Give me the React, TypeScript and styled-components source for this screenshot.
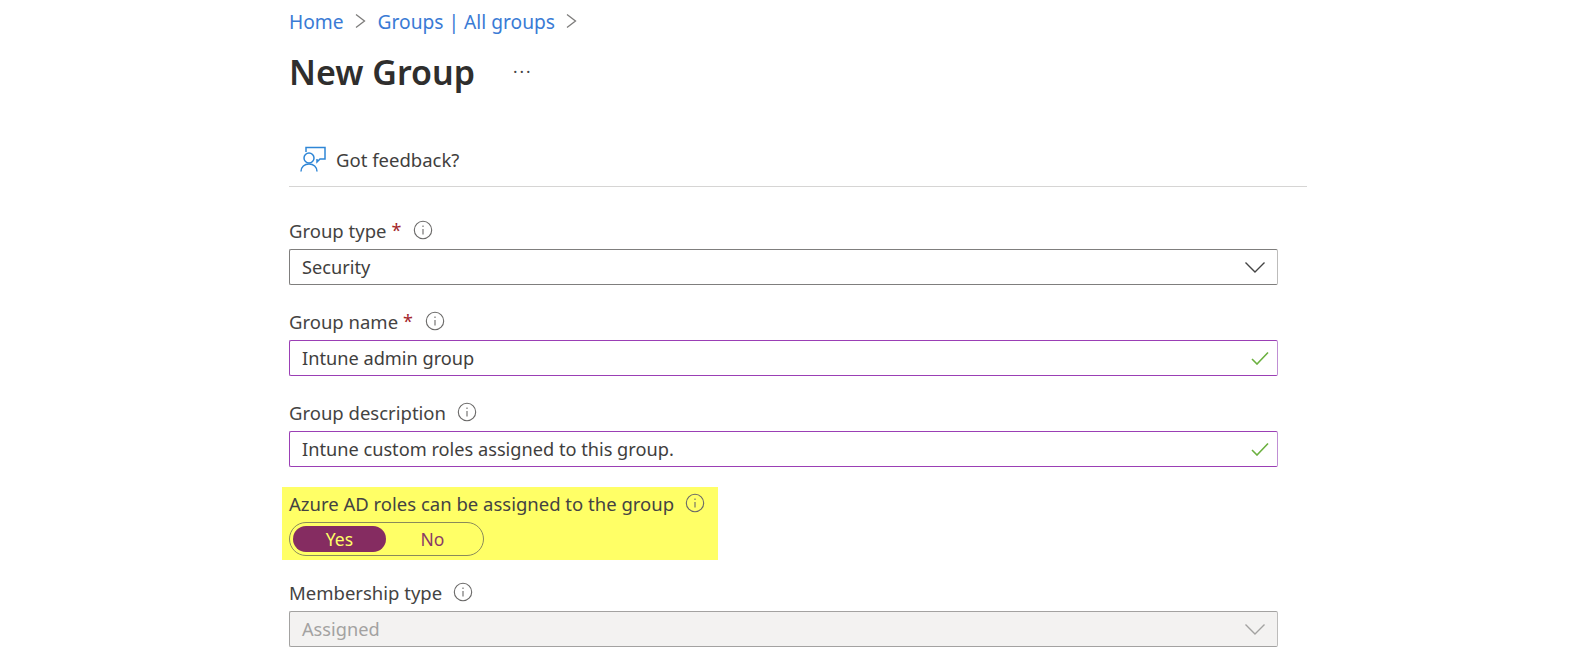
import * as React from "react";
import styled, { createGlobalStyle } from "styled-components";

const GlobalStyle = createGlobalStyle`
  html, body {
    margin: 0;
    padding: 0;
    background: #fff;
    overflow: hidden;
  }
  body {
    font-family: "Noto Sans", "Open Sans", sans-serif;
    color: #3f3e3d;
  }
`;

const Page = styled.div`
  width: 1018px;
  height: 663px;
  margin-left: 289px;
  display: flex;
  flex-direction: column;
`;

const Breadcrumb = styled.nav`
  height: 44px;
  padding-bottom: 2px;
  box-sizing: border-box;
  display: flex;
  align-items: center;
  font-size: 19.2px;
`;

const Crumb = styled.span`
  color: #3a7bd5;
`;

const CrumbChevron = styled.svg`
  width: 12px;
  height: 16px;
  margin: 0 12px 0 10px;
  fill: none;
  stroke: #7d7c7b;
  stroke-width: 1.3;
`;

const TitleRow = styled.div`
  height: 55px;
  display: flex;
  align-items: center;
`;

const Title = styled.h1`
  margin: 0;
  font-size: 34px;
  font-weight: 600;
  color: #2f2e2d;
`;

const More = styled.span`
  margin-left: 38px;
  font-size: 17px;
  letter-spacing: 2px;
  color: #444;
`;

const Toolbar = styled.div`
  margin-top: 27px;
  height: 61px;
  box-sizing: border-box;
  padding: 20px 0 0 11px;
  display: flex;
  align-items: flex-start;
  border-bottom: 1px solid #d6d5d4;
`;

const FeedbackIcon = styled.svg`
  width: 26px;
  height: 26px;
  fill: none;
  stroke: #2f86d6;
  stroke-width: 1.5;
`;

const FeedbackLabel = styled.span`
  margin-left: 10px;
  font-size: 18.5px;
  line-height: 28px;
`;

const Form = styled.div`
  width: 989px;
  display: flex;
  flex-direction: column;
`;

const Field = styled.div<{ $top: number }>`
  margin-top: ${(p) => p.$top}px;
  display: flex;
  flex-direction: column;
`;

const LabelRow = styled.div`
  height: 26px;
  margin-bottom: 5px;
  padding-bottom: 2px;
  box-sizing: border-box;
  display: flex;
  align-items: center;
  font-size: 18.5px;
  color: #444342;
`;

const Required = styled.span`
  margin: 0 1px 0 5px;
  color: #a4262c;
  font-size: 18px;
`;

const InfoIcon = styled.svg`
  width: 20px;
  height: 20px;
  margin-left: 11px;
  fill: none;
  stroke: #6a6968;
  stroke-width: 1.1;
`;

const Control = styled.div<{ $tone: "plain" | "valid" | "disabled" }>`
  height: 36px;
  box-sizing: border-box;
  padding: 0 11px 0 12px;
  display: flex;
  align-items: center;
  justify-content: space-between;
  font-size: 18.2px;
  border-radius: 2px;
  border: 1px solid
    ${(p) => (p.$tone === "valid" ? "#9b3fb5" : p.$tone === "disabled" ? "#a3a2a1" : "#7f7e7d")};
  border-right-color: ${(p) => (p.$tone === "valid" ? "#c08fd4" : "#bdbcbb")};
  background: ${(p) => (p.$tone === "disabled" ? "#f3f2f1" : "#fff")};
  color: ${(p) => (p.$tone === "disabled" ? "#a3a2a1" : "#3f3e3d")};
`;

const Highlight = styled.div`
  margin: 20px 0 0 -7px;
  padding: 0 0 4px 7px;
  width: 436px;
  height: 73px;
  box-sizing: border-box;
  background: #ffff66;
  display: flex;
  flex-direction: column;
  justify-content: flex-end;
`;

const Toggle = styled.div`
  width: 195px;
  height: 34px;
  box-sizing: border-box;
  padding: 3px 4px 3px 3px;
  display: flex;
  border: 1px solid #8a8a5a;
  border-radius: 17px;
`;

const ToggleOption = styled.div<{ $selected?: boolean }>`
  width: 93px;
  display: flex;
  align-items: center;
  justify-content: center;
  font-size: 17.5px;
  border-radius: 14px;
  background: ${(p) => (p.$selected ? "#852c61" : "transparent")};
  color: ${(p) => (p.$selected ? "#ffff66" : "#8a3a66")};
`;

const Chevron = styled.svg<{ $muted?: boolean }>`
  width: 22px;
  height: 13px;
  fill: none;
  stroke: ${(p) => (p.$muted ? "#a3a2a1" : "#444")};
  stroke-width: 1.4;
`;

const Check = styled.svg`
  width: 18px;
  height: 14px;
  margin-right: -3px;
  fill: none;
  stroke: #6bb03f;
  stroke-width: 1.6;
`;

const Info = () => (
  <InfoIcon viewBox="0 0 20 20">
    <circle cx="10" cy="10" r="8.700" />
    <path d="M10 9v5.500M10 5.500v1.400" />
  </InfoIcon>
);

const Down = ({ muted }: { muted?: boolean }) => (
  <Chevron viewBox="0 0 22 13" $muted={muted}>
    <path d="M1.500 1.500 11 11l9.500-9.500" />
  </Chevron>
);

const Valid = () => (
  <Check viewBox="0 0 18 14">
    <path d="M1 8l5 5L17 1.500" />
  </Check>
);

const CrumbArrow = () => (
  <CrumbChevron viewBox="0 0 12 16">
    <path d="M2 1.500l8.500 6.500-8.500 6.500" />
  </CrumbChevron>
);

const App: React.FC = () => {
  return (
    <>
      <GlobalStyle />
      <Page>
        <Breadcrumb>
          <Crumb>Home</Crumb>
          <CrumbArrow />
          <Crumb>Groups | All groups</Crumb>
          <CrumbArrow />
        </Breadcrumb>
        <TitleRow>
          <Title>New Group</Title>
          <More>···</More>
        </TitleRow>
        <Toolbar>
          <FeedbackIcon viewBox="0 0 26 26">
            <path d="M6 6V1.500h19V13h-5l-3 3v-3" />
            <circle cx="9" cy="12" r="5" />
            <path d="M1 25.500c0-4.500 3.500-7.500 8-7.500s8 3 8 7.500" />
          </FeedbackIcon>
          <FeedbackLabel>Got feedback?</FeedbackLabel>
        </Toolbar>
        <Form>
          <Field $top={31}>
            <LabelRow>
              Group type<Required>*</Required>
              <Info />
            </LabelRow>
            <Control $tone="plain">
              Security
              <Down />
            </Control>
          </Field>
          <Field $top={24}>
            <LabelRow>
              Group name<Required>*</Required>
              <Info />
            </LabelRow>
            <Control $tone="valid">
              Intune admin group
              <Valid />
            </Control>
          </Field>
          <Field $top={24}>
            <LabelRow>
              Group description
              <Info />
            </LabelRow>
            <Control $tone="valid">
              Intune custom roles assigned to this group.
              <Valid />
            </Control>
          </Field>
          <Highlight>
            <LabelRow>
              Azure AD roles can be assigned to the group
              <Info />
            </LabelRow>
            <Toggle>
              <ToggleOption $selected>Yes</ToggleOption>
              <ToggleOption>No</ToggleOption>
            </Toggle>
          </Highlight>
          <Field $top={20}>
            <LabelRow>
              Membership type
              <Info />
            </LabelRow>
            <Control $tone="disabled">
              Assigned
              <Down muted />
            </Control>
          </Field>
        </Form>
      </Page>
    </>
  );
};

export default App;
